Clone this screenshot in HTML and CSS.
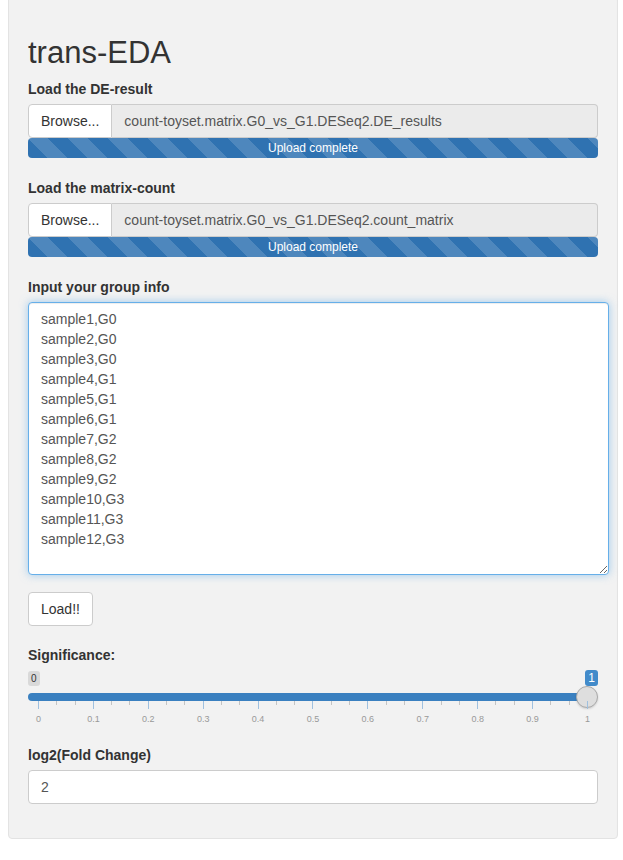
FILE: index.html
```html
<!DOCTYPE html>
<html>
<head>
<meta charset="utf-8">
<link rel="stylesheet" href="styles.css">
</head>
<body>
<div class="well">
  <h2 class="title">trans-EDA</h2>

  <div class="form-group file-group">
    <label class="control-label">Load the DE-result</label>
    <div class="input-group">
      <span class="btn-file">Browse...</span>
      <div class="file-name">count-toyset.matrix.G0_vs_G1.DESeq2.DE_results</div>
    </div>
    <div class="progress"><div class="progress-bar">Upload complete</div></div>
  </div>

  <div class="form-group file-group">
    <label class="control-label">Load the matrix-count</label>
    <div class="input-group">
      <span class="btn-file">Browse...</span>
      <div class="file-name">count-toyset.matrix.G0_vs_G1.DESeq2.count_matrix</div>
    </div>
    <div class="progress"><div class="progress-bar">Upload complete</div></div>
  </div>

  <div class="form-group text-group">
    <label class="control-label">Input your group info</label>
    <textarea class="form-control area">sample1,G0
sample2,G0
sample3,G0
sample4,G1
sample5,G1
sample6,G1
sample7,G2
sample8,G2
sample9,G2
sample10,G3
sample11,G3
sample12,G3</textarea>
  </div>

  <button class="btn">Load!!</button>

  <div class="form-group slider-group">
    <label class="control-label">Significance:</label>
    <div class="irs-labels">
      <span class="irs-min">0</span>
      <span class="irs-single">1</span>
    </div>
    <div class="irs-row">
      <div class="irs-bar"></div>
      <div class="irs-handle"></div>
    </div>
    <div class="irs-grid">
      <i class="pol big"></i><i class="pol"></i><i class="pol"></i>
      <i class="pol big"></i><i class="pol"></i><i class="pol"></i>
      <i class="pol big"></i><i class="pol"></i><i class="pol"></i>
      <i class="pol big"></i><i class="pol"></i><i class="pol"></i>
      <i class="pol big"></i><i class="pol"></i><i class="pol"></i>
      <i class="pol big"></i><i class="pol"></i><i class="pol"></i>
      <i class="pol big"></i><i class="pol"></i><i class="pol"></i>
      <i class="pol big"></i><i class="pol"></i><i class="pol"></i>
      <i class="pol big"></i><i class="pol"></i><i class="pol"></i>
      <i class="pol big"></i><i class="pol"></i><i class="pol"></i>
      <i class="pol big"></i>
    </div>
    <div class="irs-grid-text">
      <span><b>0</b></span><span><b>0.1</b></span><span><b>0.2</b></span><span><b>0.3</b></span>
      <span><b>0.4</b></span><span><b>0.5</b></span><span><b>0.6</b></span><span><b>0.7</b></span>
      <span><b>0.8</b></span><span><b>0.9</b></span><span><b>1</b></span>
    </div>
  </div>

  <div class="form-group last-group">
    <label class="control-label">log2(Fold Change)</label>
    <div class="form-control num">2</div>
  </div>
</div>
</body>
</html>
```

FILE: styles.css
```css
* { box-sizing: border-box; }
html, body { background: #fff; }
body {
  margin: 0;
  font-family: "Liberation Sans", Arial, sans-serif;
  font-size: 14px;
  line-height: 20px;
  color: #333;
}
.well {
  width: 610px;
  margin: -4px 0 0 8px;
  padding: 19px;
  background: #f2f2f2;
  border: 1px solid #e3e3e3;
  border-radius: 4px;
  box-shadow: inset 0 1px 1px rgba(0,0,0,.05);
}
.title {
  margin: 20px 0 10px;
  font-size: 31px;
  font-weight: 400;
  line-height: 33px;
}
.form-group { margin-bottom: 15px; }
.control-label {
  display: block;
  font-weight: bold;
  margin-bottom: 5px;
}
.file-group { margin-bottom: 20px; }
.input-group { display: flex; height: 34px; }
.btn-file {
  padding: 6px 12px;
  background: #fff;
  border: 1px solid #ccc;
  border-radius: 4px 0 0 4px;
  color: #333;
  white-space: nowrap;
}
.file-name {
  flex: 1;
  padding: 6px 12px;
  background: #ebebeb;
  border: 1px solid #ccc;
  border-left: 0;
  border-radius: 0 4px 4px 0;
  color: #555;
  white-space: nowrap;
  overflow: hidden;
}
.progress {
  height: 20px;
  border-radius: 4px;
  overflow: hidden;
  background: #f5f5f5;
}
.progress-bar {
  height: 20px;
  background-color: #2f72b1;
  background-image: linear-gradient(45deg, rgba(255,255,255,.15) 25%, transparent 25%, transparent 50%, rgba(255,255,255,.15) 50%, rgba(255,255,255,.15) 75%, transparent 75%, transparent);
  background-size: 40px 40px;
  color: #fff;
  font-size: 12px;
  line-height: 20px;
  text-align: center;
}
.form-control {
  display: block;
  padding: 6px 12px;
  font-family: inherit;
  font-size: 14px;
  line-height: 20px;
  color: #555;
  background: #fff;
  border: 1px solid #ccc;
  border-radius: 4px;
}
.text-group { margin-bottom: 17px; }
.area {
  width: 581px;
  height: 273px;
  margin: 0;
  border-color: #66afe9;
  box-shadow: inset 0 1px 1px rgba(0,0,0,.075), 0 0 8px rgba(102,175,233,.6);
  outline: 0;
  resize: both;
}
.btn {
  display: block;
  height: 34px;
  padding: 6px 12px;
  margin: 0 0 19px;
  font-family: inherit;
  font-size: 14px;
  line-height: 20px;
  color: #333;
  background: #fff;
  border: 1px solid #ccc;
  border-radius: 4px;
}
.slider-group { margin-bottom: 20px; }
.irs-labels {
  display: flex;
  justify-content: space-between;
  align-items: flex-start;
  height: 16px;
  margin-top: 1px;
  margin-bottom: 1px;
}
.irs-min {
  margin-top: 1px;
  font-size: 10px;
  line-height: 13px;
  padding: 1px 3px;
  color: #333;
  background: rgba(0,0,0,.1);
  border-radius: 3px;
}
.irs-single {
  font-size: 12px;
  line-height: 14px;
  padding: 1px 3px;
  color: #fff;
  background: #428bca;
  border-radius: 3px;
}
.irs-row {
  display: flex;
  align-items: center;
  height: 8px;
  margin-top: 7px;
}
.irs-bar {
  flex: 1;
  height: 8px;
  background: #3a80c0;
  border-radius: 8px;
}
.irs-handle {
  flex: none;
  width: 22px;
  height: 22px;
  margin-left: -11px;
  background: #dedede;
  border: 1px solid #aaa;
  border-radius: 50%;
  box-shadow: 0 1px 2px rgba(0,0,0,.15);
}
.irs-grid {
  display: flex;
  justify-content: space-between;
  align-items: flex-start;
  padding: 0 10px;
  height: 9px;
}
.pol {
  width: 1px;
  height: 4px;
  background: #c4c4c4;
}
.pol.big {
  height: 8px;
  background: #9fc0df;
}
.irs-grid-text {
  display: flex;
  justify-content: space-between;
  padding: 0 10px;
  margin-top: 3px;
  font-size: 9px;
  line-height: 12px;
  color: #999;
}
.irs-grid-text span {
  width: 1px;
  display: flex;
  justify-content: center;
}
.irs-grid-text b { font-weight: normal; white-space: nowrap; }
.last-group { margin-bottom: 15px; }
.num { height: 34px; width: 100%; }
```
